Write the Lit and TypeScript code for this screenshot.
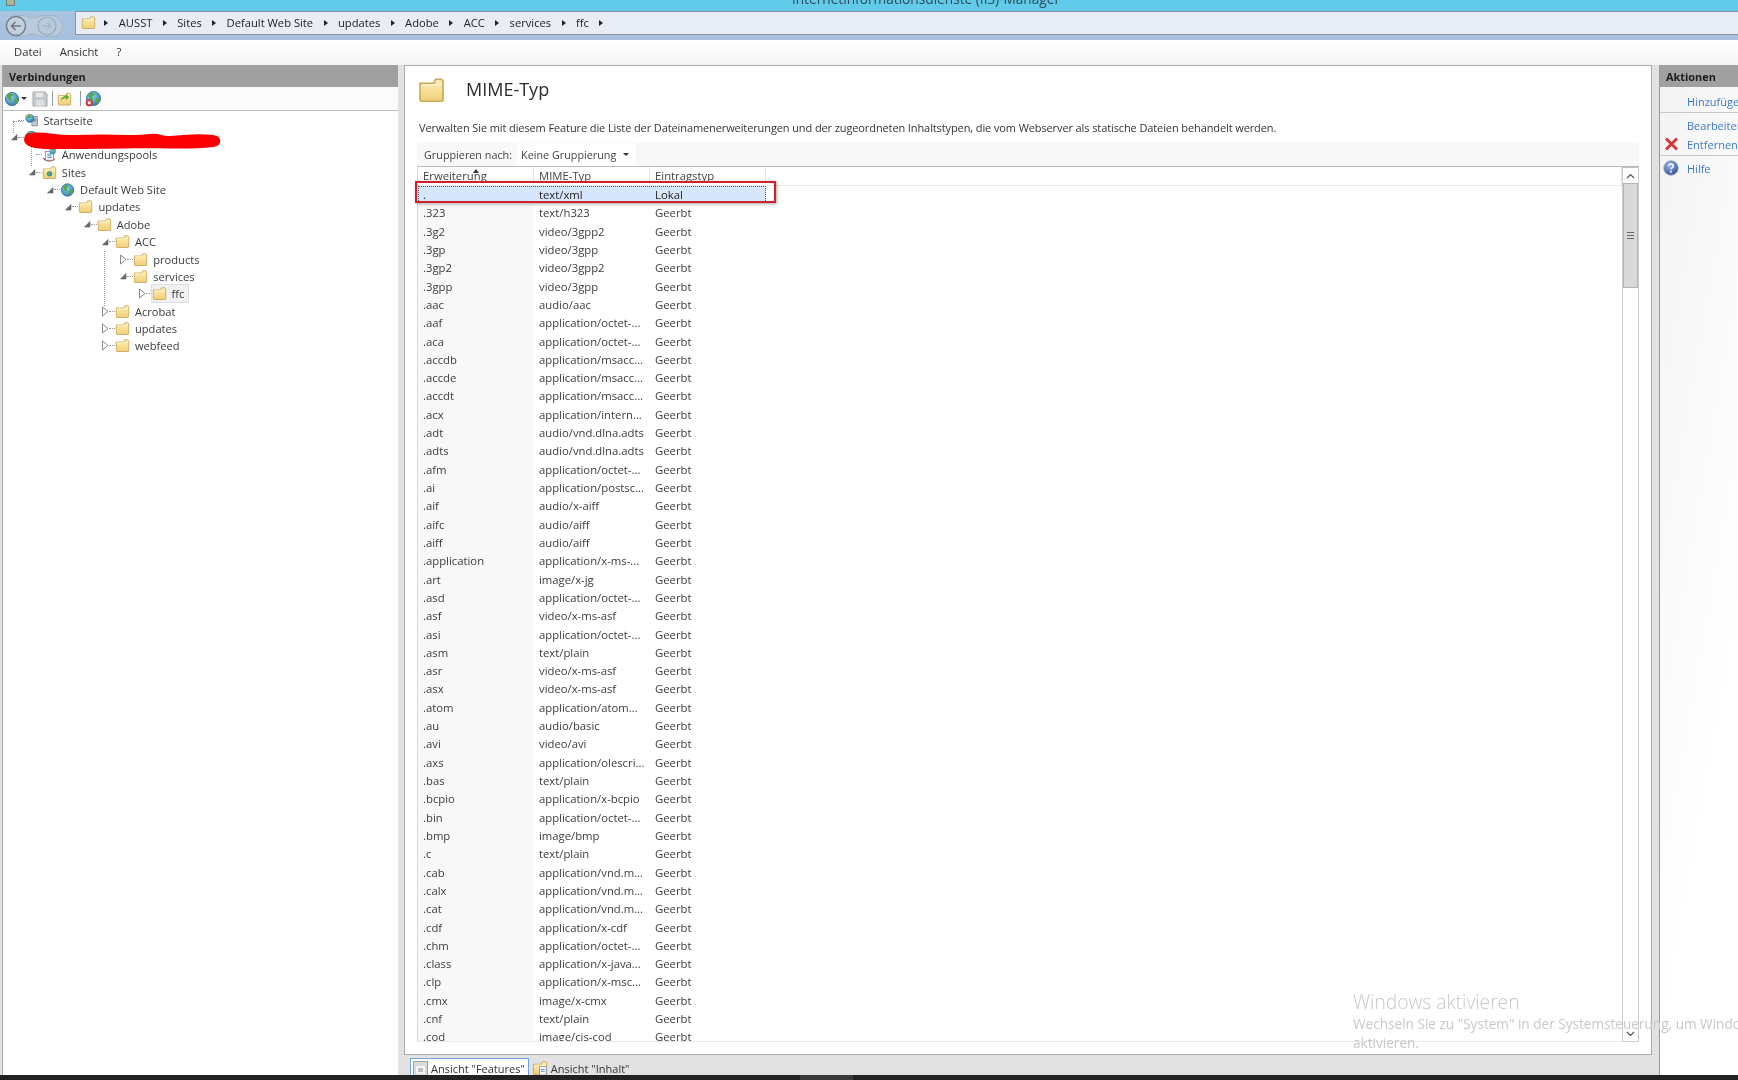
import { LitElement, html, css, svg } from "lit";
import { customElement } from "lit/decorators.js";

const G = "Geerbt";
const ROWS: [string, string, string][] = ([
  [".", "text/xml"], [".323", "text/h323"], [".3g2", "video/3gpp2"], [".3gp", "video/3gpp"],
  [".3gp2", "video/3gpp2"], [".3gpp", "video/3gpp"], [".aac", "audio/aac"], [".aaf", "application/octet-..."],
  [".aca", "application/octet-..."], [".accdb", "application/msacc..."], [".accde", "application/msacc..."],
  [".accdt", "application/msacc..."], [".acx", "application/intern..."], [".adt", "audio/vnd.dlna.adts"],
  [".adts", "audio/vnd.dlna.adts"], [".afm", "application/octet-..."], [".ai", "application/postsc..."],
  [".aif", "audio/x-aiff"], [".aifc", "audio/aiff"], [".aiff", "audio/aiff"], [".application", "application/x-ms-..."],
  [".art", "image/x-jg"], [".asd", "application/octet-..."], [".asf", "video/x-ms-asf"], [".asi", "application/octet-..."],
  [".asm", "text/plain"], [".asr", "video/x-ms-asf"], [".asx", "video/x-ms-asf"], [".atom", "application/atom..."],
  [".au", "audio/basic"], [".avi", "video/avi"], [".axs", "application/olescri..."], [".bas", "text/plain"],
  [".bcpio", "application/x-bcpio"], [".bin", "application/octet-..."], [".bmp", "image/bmp"], [".c", "text/plain"],
  [".cab", "application/vnd.m..."], [".calx", "application/vnd.m..."], [".cat", "application/vnd.m..."],
  [".cdf", "application/x-cdf"], [".chm", "application/octet-..."], [".class", "application/x-java..."],
  [".clp", "application/x-msc..."], [".cmx", "image/x-cmx"], [".cnf", "text/plain"], [".cod", "image/cis-cod"],
] as [string, string][]).map((r, i) => [r[0], r[1], i === 0 ? "Lokal" : G] as [string, string, string]);

type Exp = "open" | "closed" | "none";
type Ico = "home" | "server" | "pools" | "sites" | "globe" | "folder";
const TREE: { d: number; label: string; exp: Exp; icon: Ico; sel?: boolean }[] = [
  { d: 0, label: "Startseite", exp: "none", icon: "home" },
  { d: 0, label: "", exp: "open", icon: "server" },
  { d: 1, label: "Anwendungspools", exp: "none", icon: "pools" },
  { d: 1, label: "Sites", exp: "open", icon: "sites" },
  { d: 2, label: "Default Web Site", exp: "open", icon: "globe" },
  { d: 3, label: "updates", exp: "open", icon: "folder" },
  { d: 4, label: "Adobe", exp: "open", icon: "folder" },
  { d: 5, label: "ACC", exp: "open", icon: "folder" },
  { d: 6, label: "products", exp: "closed", icon: "folder" },
  { d: 6, label: "services", exp: "open", icon: "folder" },
  { d: 7, label: "ffc", exp: "closed", icon: "folder", sel: true },
  { d: 5, label: "Acrobat", exp: "closed", icon: "folder" },
  { d: 5, label: "updates", exp: "closed", icon: "folder" },
  { d: 5, label: "webfeed", exp: "closed", icon: "folder" },
];
const CRUMBS = ["AUSST", "Sites", "Default Web Site", "updates", "Adobe", "ACC", "services", "ffc"];

const folderBody = svg`
  <path d="M1.5 4.5H10l1-2.5h3.5l1 1v11.5a.8.8 0 0 1-.8.8H2.300a.8.8 0 0 1-.8-.8z" fill="url(#fold)" stroke="#c9a95f" stroke-width="1"/>
  <path d="M2.500 5.500H14.500" stroke="#fff3c8" stroke-width="1"/>`;
const folder = (s = 16) => html`<svg width=${s} height=${s} viewBox="0 0 17 17">${folderBody}</svg>`;
const globeBody = svg`
  <circle cx="8" cy="8" r="6.600" fill="url(#sea)" stroke="#2a6a96" stroke-width=".8"/>
  <path d="M4 3.500c2-1 4-1 5 0 .6 1-1 2-2 2.400-.4 1.200.8 1.600.4 3C7 10 5.400 9.600 4.600 8 3.800 6.800 2.800 5 4 3.500zM10.500 8c1.400-.4 3-.2 3.400.6 0 2-1 3.400-2.400 4.400-1.200-.6-1.600-3.600-1-5z" fill="#57a845"/>`;
const globe = (s = 16) => html`<svg width=${s} height=${s} viewBox="0 0 16 16">${globeBody}</svg>`;

function treeIcon(k: Ico) {
  switch (k) {
    case "folder": return folder(15);
    case "globe": return globe(16);
    case "sites": return html`<svg width="15" height="15" viewBox="0 0 17 17">${folderBody}
      <circle cx="8.500" cy="10" r="3" fill="#2f8fb8"/><circle cx="8" cy="10" r="1.400" fill="#6ab04c"/></svg>`;
    case "pools": return html`<svg width="17" height="17" viewBox="0 0 17 17">
      <path d="M1.500 12.500c2 4 10 4.400 13 1" fill="none" stroke="#c0392b" stroke-width="1.300"/>
      <rect x="4" y="5" width="9" height="10" fill="#fff" stroke="#8a8f96"/>
      <path d="M6 8h5M6 10h5M6 12h5" stroke="#4a7fc0"/>
      <circle cx="12" cy="4.500" r="3.600" fill="url(#sea)"/><path d="M10.500 3c1-.6 2-.6 2.600.2-.4.8-1.400 1.400-2.200 1.200z" fill="#57a845"/></svg>`;
    case "home": return html`<svg width="18" height="16" viewBox="0 0 18 16">
      <rect x="9.500" y="4" width="6.500" height="11" fill="#c6ccd2" stroke="#7c858d"/>
      <path d="M11 7h3.500M11 9h3.500" stroke="#566"/>
      <circle cx="7" cy="6" r="5" fill="url(#sea)" stroke="#2a6a96" stroke-width=".6"/>
      <path d="M4 3c2-1.200 4-.8 4.600.4-.5 1-2 1.600-2 2.800C5 7 3.400 5 4 3z" fill="#57a845"/>
      <path d="M1.500 3.500 5 1" stroke="#e7c64f" stroke-width="1.400"/></svg>`;
    case "server": return html`<svg width="15" height="15" viewBox="0 0 16 16">${globeBody}</svg>`;
  }
}

function expander(e: Exp) {
  if (e === "open") return html`<svg width="8" height="8" viewBox="0 0 8 8"><path d="M7 1.500V7H1.500z" fill="#666" stroke="#666" stroke-width=".6"/></svg>`;
  if (e === "closed") return html`<svg width="8" height="11" viewBox="0 0 8 11"><path d="M1.500 1v9L7 5.500z" fill="#fff" stroke="#8a8a8a"/></svg>`;
  return html`<svg width="8" height="8"></svg>`;
}

@customElement("app-root")
export class AppRoot extends LitElement {
  static styles = css`
    :host { display: block; width: 1738px; height: 1080px; overflow: hidden; position: relative;
      font-family: "Open Sans", "Noto Sans", sans-serif; font-size: 11.3px; color: #333; background: #e2e2e2; }
    * { box-sizing: border-box; }
    .stage { width: 1738px; height: 1080px; position: relative; filter: blur(.3px); }
    .page { display: flex; flex-direction: column; height: 1080px; }
    .defs { position: absolute; width: 0; height: 0; }

    .title { height: 11px; flex: none; background: #62cbea; position: relative; overflow: hidden; display: flex; justify-content: center; padding-left: 114px; }
    .title span { font-size: 13.7px; line-height: 16px; margin-top: -9px; color: #2f4a58; }
    .appicon { position: absolute; left: 6px; top: -3px; width: 9px; height: 9px; background: #a9b98a; border: 1px solid #6d7f80; }

    .nav { height: 29px; flex: none; display: flex; background: linear-gradient(#a9c3e0, #a8c0e0); }
    .backfwd { width: 75px; flex: none; display: flex; align-items: center; padding: 1px 0 0 4px; }
    .addr { flex: 1; height: 24px; background: #e8edf5; border-top: 1px solid #8a93a0; border-bottom: 1px solid #8a93a0; border-left: 1px solid #8a93a0;
      display: flex; align-items: center; padding: 0 0 1px 5px; gap: 10.400px; font-size: 11.2px; color: #222; }
    .addr svg { margin-right: -2px; }
    .crumbarrow { width: 0; height: 0; border-left: 4px solid #222; border-top: 3.500px solid transparent; border-bottom: 3.500px solid transparent; }

    .menu { height: 25px; flex: none; background: linear-gradient(#fff, #f4f4f4); display: flex; align-items: center; padding: 0 0 2px 14px; gap: 18px; color: #333; }

    .main { flex: 1; min-height: 0; display: grid; grid-template-columns: 396px 1248px 1fr; column-gap: 6px; padding-left: 2px; }
    .head { height: 22px; background: #a0a0a0; font-weight: 700; color: #1c1c1c; display: flex; align-items: center; padding-left: 6px; flex: none; font-size: 10.9px; }

    .left { background: #fff; border-left: 1px solid #a8a8a8; display: flex; flex-direction: column; min-height: 0; }
    .toolbar { height: 24px; flex: none; display: flex; align-items: center; padding-left: 1px; border-bottom: 1px solid #bdbdbd; background: #fbfbfb; }
    .ddarrow { width: 0; height: 0; border-top: 3px solid #333; border-left: 3px solid transparent; border-right: 3px solid transparent; margin: 0 5px 0 1px; }
    .tsep { width: 1px; height: 15px; background: #999; margin: 0 4px; }
    .tsep.wide { margin-left: 8px; }
    .tree { flex: 1; position: relative; padding-top: .4px; }
    .trow { height: 17.380px; display: flex; align-items: center; white-space: nowrap; color: #3a3a3a; }
    .trow .exp { width: 8px; flex: none; display: flex; align-items: center; justify-content: center; }
    .trow .dash { width: 6px; flex: none; border-top: 1px dotted #999; }
    .node { display: flex; align-items: center; gap: 5px; height: 17px; font-size: 11.1px; }
    .node .ic { width: 15px; height: 17px; flex: none; display: flex; align-items: center; justify-content: center; }
    .node.sel { background: #f1f1f1; outline: 1px solid #dedede; padding-right: 4px; }
    .vline { position: absolute; width: 0; border-left: 1px dotted #999; }
    .hline { position: absolute; height: 0; border-top: 1px dotted #999; }
    .scribble { position: absolute; left: 19px; top: 14px; }

    .center { display: flex; flex-direction: column; min-height: 0; }
    .panel { height: 990px; flex: none; background: #fff; border: 1px solid #a9a9a9; padding: 10px 12px 0 12px; display: flex; flex-direction: column; }
    .ptitle { height: 28px; flex: none; display: flex; align-items: center; gap: 20px; }
    .ptitle h1 { margin: -2px 0 0; font-size: 18px; font-weight: 400; color: #2b2b2b; }
    .desc { margin: 15px 0 0 2px; height: 18px; line-height: 18px; flex: none; white-space: nowrap; color: #333; font-size: 11px; letter-spacing: -.105px; }
    .group { margin-top: 5px; height: 24px; flex: none; background: #f8f8f8; display: flex; align-items: center; padding-left: 7px; gap: 5px; color: #444; font-size: 10.8px; }
    .dd { background: #fff; height: 23px; width: 119px; display: flex; align-items: center; justify-content: space-between; padding: 0 7px 0 4px; }
    .dd i { width: 0; height: 0; border-top: 3px solid #333; border-left: 3px solid transparent; border-right: 3px solid transparent; }

    .tablewrap { height: 876px; flex: none; display: grid; grid-template-columns: 1fr 17px; border-top: 1px solid #bcbcbc; border-left: 1px solid #d8d8d8; }
    .tbl { min-width: 0; overflow: hidden; position: relative; border-bottom: 1px solid #ececec; }
    .thead { height: 19px; display: grid; grid-template-columns: 116px 116px 116px 1fr; border-bottom: 1px solid #e8e8e8; overflow: hidden; position: relative; }
    .th { border-right: 1px solid #e4e4e4; padding-left: 5px; line-height: 18px; height: 18px; overflow: hidden; white-space: nowrap; color: #444; }
    .th:last-child { border-right: 0; }
    .sort { position: absolute; left: 55px; top: 2px; width: 0; height: 0; border-bottom: 4px solid #333; border-left: 3px solid transparent; border-right: 3px solid transparent; }
    .tr { display: grid; grid-template-columns: 116px 116px 116px; height: 18.320px; align-items: center; white-space: nowrap; width: 348px; }
    .tr > div { padding-left: 5px; overflow: hidden; height: 100%; line-height: 18.320px; color: #3c3c3c; }
    .tr > div:first-child { background: #f8f8f8; }
    .tr.sel { background: #d6e7fb; outline: 1px dotted #555; outline-offset: -1px; height: 16.600px; margin-bottom: 1.720px; }
    .tr.sel > div { background: transparent; line-height: 17.600px; color: #222; }
    .redbox { position: absolute; left: 415px; top: 181px; width: 361px; height: 22px; border: 2px solid #d0202c; box-shadow: 1px 1px 3px rgba(0,0,0,.35); pointer-events: none; }

    .sb { border: 1px solid #cdcdcd; border-top: 1px solid #bdbdbd; display: flex; flex-direction: column; background: #fff; }
    .sbtn { height: 15px; flex: none; display: flex; align-items: center; justify-content: center; background: #fff; }
    .thumb { height: 105px; flex: none; background: #d9d9d9; border: 1px solid #b4b4b4; display: flex; align-items: center; justify-content: center; }
    .grip { width: 7px; height: 7px; background: repeating-linear-gradient(#666 0 1px, #d9d9d9 1px 3px); }
    .track { flex: 1; }

    .tabs { flex: 1; display: flex; align-items: flex-start; padding: 3px 0 0 6px; gap: 1px; font-size: 11px; }
    .tab { height: 20px; display: flex; align-items: center; gap: 3px; padding: 0 3px 0 2px; color: #333; white-space: nowrap; }
    .tab.on { background: #fff; border: 1px solid #6ea6e2; }

    .right { background: linear-gradient(100deg, #f3f3f3, #fff 70%); border-left: 1px solid #999; margin-left: 1px; display: flex; flex-direction: column; min-width: 0; overflow: hidden; }
    .alist { padding-top: 4.500px; display: flex; flex-direction: column; font-size: 11px; }
    .act { height: 19px; flex: none; display: grid; grid-template-columns: 27px 1fr; align-items: center; color: #3a7acb; white-space: nowrap; }
    .act .ai { display: flex; justify-content: center; padding-right: 5px; }
    .asep { height: 1px; background: #c8c8c8; margin: 1.500px 0 2.500px 0; flex: none; }

    .black { height: 5px; flex: none; background: #222; display: flex; padding-left: 800px; }
    .black i { width: 53px; background: #3a3a3a; }

    .wm { position: absolute; left: 1353px; top: 989px; white-space: nowrap; color: #c8c8c8; pointer-events: none; font-size: 13.6px; line-height: 18.800px; }
    .wm b { display: block; font-weight: 300; font-size: 19.200px; line-height: 25.700px; }
  `;

  render() {
    return html`
      <svg class="defs" aria-hidden="true"><defs>
        <linearGradient id="fold" x1="0" y1="0" x2="0" y2="1"><stop offset="0" stop-color="#fdeeb5"/><stop offset="1" stop-color="#f0cf75"/></linearGradient>
        <radialGradient id="sea" cx=".4" cy=".35" r=".8"><stop offset="0" stop-color="#8fd4ee"/><stop offset="1" stop-color="#1f6da5"/></radialGradient>
        <radialGradient id="help" cx=".4" cy=".3" r=".8"><stop offset="0" stop-color="#9db6e8"/><stop offset="1" stop-color="#2a479c"/></radialGradient>
      </defs></svg>
      <div class="stage">
      <div class="page">
        <div class="title"><i class="appicon"></i><span>Internetinformationsdienste (IIS)-Manager</span></div>
        <div class="nav">
          <div class="backfwd">
            <svg width="62" height="26" viewBox="0 0 62 26">
              <path d="M12 2.500h6c5 0 6 2.500 11 2.500s6-2.500 11-2.500h8a10.500 10.500 0 0 1 0 21h-8c-5 0-6-2.500-11-2.500s-6 2.500-11 2.500h-6a10.500 10.500 0 0 1 0-21z" fill="#b9cadc" stroke="#a3b5c8"/>
              <circle cx="12" cy="13" r="9.500" fill="#c3d0dd" stroke="#75818d" stroke-width="1.500"/>
              <path d="M17 13H8M11.500 9l-4 4 4 4" fill="none" stroke="#6f7a85" stroke-width="1.600"/>
              <circle cx="43" cy="13" r="9" fill="#b7c9dc" stroke="#98a9ba" stroke-width="1.200"/>
              <path d="M39 13h7M43.500 10l3 3-3 3" fill="none" stroke="#a5b4c3" stroke-width="1.200"/>
            </svg>
          </div>
          <div class="addr">
            ${folder(15)}
            ${CRUMBS.map((c) => html`<i class="crumbarrow"></i><span>${c}</span>`)}
            <i class="crumbarrow"></i>
          </div>
        </div>
        <div class="menu"><span>Datei</span><span>Ansicht</span><span>?</span></div>
        <div class="main">
          <section class="left">
            <div class="head">Verbindungen</div>
            <div class="toolbar">
              ${globe(16)}<i class="ddarrow"></i>
              <svg width="16" height="16" viewBox="0 0 16 16"><path d="M1 1h12l2 2v12H1z" fill="#c6c9cc" stroke="#a5a8ab"/><rect x="4" y="1.500" width="7" height="4.500" fill="#e6e7e8"/><rect x="4" y="9" width="8" height="6" fill="#dedfe0"/></svg>
              <i class="tsep"></i>
              <svg width="15" height="16" viewBox="0 0 17 17">${folderBody}<path d="M4 11c1-4 3-6 6-6V2.500l4 4-4 3.500V7.500C8 7.500 6 9 4 11z" fill="#69a93c"/></svg>
              <i class="tsep wide"></i>
              <svg width="17" height="17" viewBox="0 0 16 16">${globeBody}<circle cx="4" cy="12" r="3.400" fill="#c93a3a"/><path d="M2.700 10.700l2.600 2.600M5.300 10.700l-2.600 2.600" stroke="#fff"/></svg>
            </div>
            <div class="tree">
              ${TREE.map((t) => html`
                <div class="trow" style="padding-left:${6.5 + t.d * 18.3}px">
                  <span class="exp">${expander(t.exp)}</span><span class="dash"></span>
                  <span class="node ${t.sel ? "sel" : ""}"><span class="ic">${treeIcon(t.icon)}</span>${t.label ? html`<span>${t.label}</span>` : ""}</span>
                </div>`)}
              <i class="hline" style="left:10px;top:10px;width:10px"></i>
              <i class="vline" style="left:10px;top:10px;height:12px"></i>
              <i class="vline" style="left:28px;top:34px;height:21px"></i>
              <i class="vline" style="left:101px;top:140px;height:55px"></i>
              <svg class="scribble" width="204" height="26" viewBox="0 0 204 26"><path d="M9 10c18-2 22 3 46 2 30-1 36 0 58 0 14 0 18-3 26 0 6 2 12 1 22 0 10-1 22-1 30 0 7 1 7 7 0 8-28 3-50 1-70 1-34 1-58 1-84 1C18 23 5 21 4 15c-.5-3 2-5 5-5z" fill="#fb0000" stroke="#fb0000" stroke-width="4"/></svg>
            </div>
          </section>

          <section class="center">
            <div class="panel">
              <div class="ptitle">
                <svg width="29" height="28" viewBox="0 0 17 17">${folderBody}</svg>
                <h1>MIME-Typ</h1>
              </div>
              <div class="desc">Verwalten Sie mit diesem Feature die Liste der Dateinamenerweiterungen und der zugeordneten Inhaltstypen, die vom Webserver als statische Dateien behandelt werden.</div>
              <div class="group"><span>Gruppieren nach:</span><span class="dd"><span>Keine Gruppierung</span><i></i></span></div>
              <div class="tablewrap">
                <div class="tbl">
                  <div class="thead">
                    <div class="th">Erweiterung</div><div class="th">MIME-Typ</div><div class="th">Eintragstyp</div><div class="th"></div>
                    <i class="sort"></i>
                  </div>
                  ${ROWS.map((r, i) => html`<div class="tr ${i === 0 ? "sel" : ""}"><div>${r[0]}</div><div>${r[1]}</div><div>${r[2]}</div></div>`)}
                </div>
                <div class="sb">
                  <div class="sbtn"><svg width="9" height="6" viewBox="0 0 9 6"><path d="M1 5l3.500-3.500L8 5" fill="none" stroke="#555" stroke-width="1.200"/></svg></div>
                  <div class="thumb"><i class="grip"></i></div>
                  <div class="track"></div>
                  <div class="sbtn"><svg width="9" height="6" viewBox="0 0 9 6"><path d="M1 1l3.500 3.500L8 1" fill="none" stroke="#555" stroke-width="1.200"/></svg></div>
                </div>
              </div>
            </div>
            <div class="tabs">
              <div class="tab on">
                <svg width="15" height="15" viewBox="0 0 15 15"><rect x=".5" y=".5" width="14" height="14" fill="#d8dadc" stroke="#9aa0a6"/><rect x="3" y="5" width="9" height="8" fill="#f6f6f6"/><path d="M5 8h5M5 10h5" stroke="#888"/></svg>
                <span>Ansicht "Features"</span>
              </div>
              <div class="tab">
                <svg width="16" height="16" viewBox="0 0 17 17">${folderBody}<rect x="8" y="7" width="7" height="9" fill="#fff" stroke="#8aa0b8"/><path d="M9.500 10h4M9.500 12h4" stroke="#5d88bd"/></svg>
                <span>Ansicht "Inhalt"</span>
              </div>
            </div>
          </section>

          <aside class="right">
            <div class="head">Aktionen</div>
            <div class="alist">
              <div class="act"><span></span><span>Hinzufügen...</span></div>
              <div class="asep"></div>
              <div class="act"><span></span><span>Bearbeiten...</span></div>
              <div class="act"><span class="ai"><svg width="15" height="14" viewBox="0 0 15 14"><path d="M2 1.500l11 11M13 1.500l-11 11" stroke="#d9363a" stroke-width="3"/></svg></span><span>Entfernen</span></div>
              <div class="asep"></div>
              <div class="act"><span class="ai"><svg width="16" height="16" viewBox="0 0 16 16"><circle cx="8" cy="8" r="7.200" fill="url(#help)" stroke="#8d9bb8" stroke-width=".8"/><path d="M5.800 6c.2-2.600 4.600-2.600 4.600 0 0 1.600-2.400 1.600-2.400 3.400" fill="none" stroke="#fff" stroke-width="1.500"/><circle cx="8" cy="11.800" r="1" fill="#fff"/></svg></span><span>Hilfe</span></div>
            </div>
          </aside>
        </div>
        <div class="black"><i></i></div>
      </div>
      <div class="redbox"></div>
      <div class="wm"><b>Windows aktivieren</b>Wechseln Sie zu "System" in der Systemsteuerung, um Windows zu<br>aktivieren.</div>
      </div>
    `;
  }
}
